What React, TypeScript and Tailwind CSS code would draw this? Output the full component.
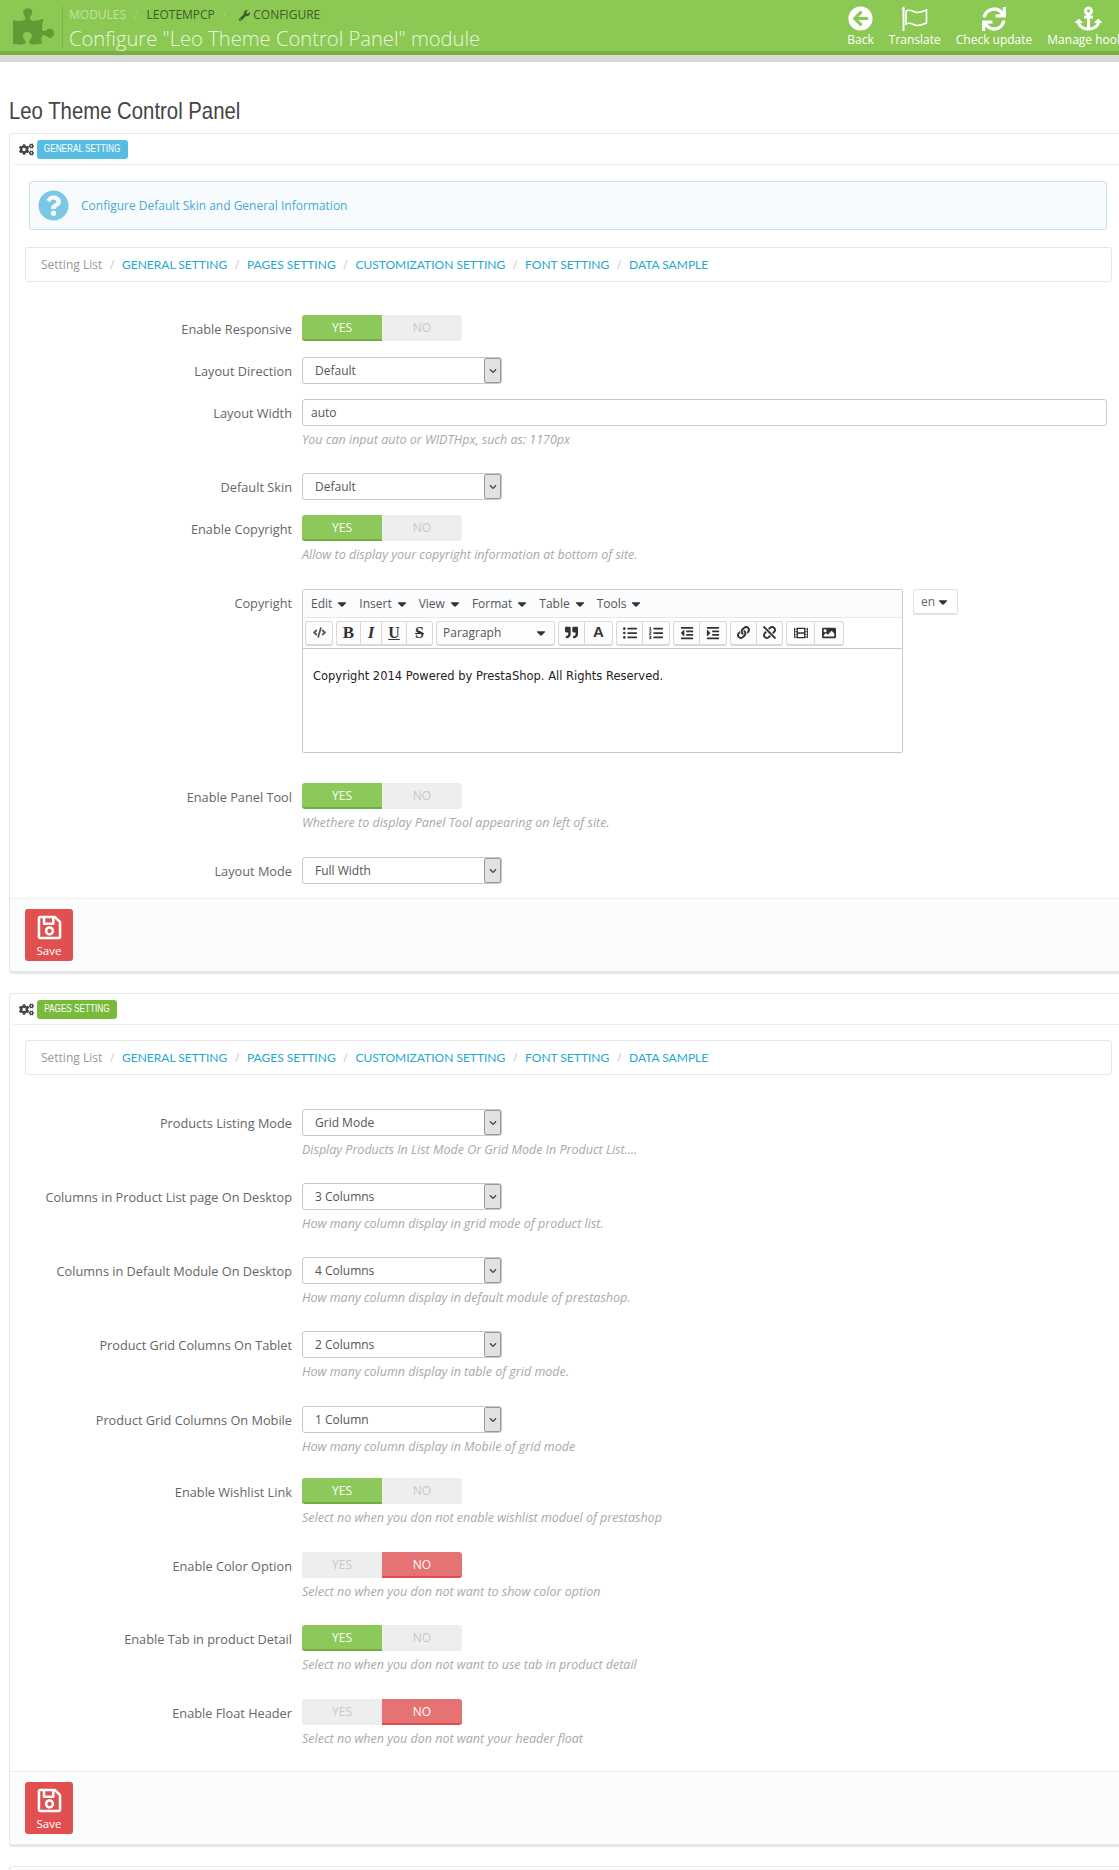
import type { ReactNode } from 'react';
import {
  FaPuzzlePiece, FaWrench, FaCogs, FaQuestionCircle, FaArrowCircleLeft, FaSync, FaAnchor, FaRegSave,
  FaCode, FaQuoteRight, FaListUl, FaListOl, FaOutdent, FaIndent, FaLink, FaUnlink, FaFilm, FaImage, FaCaretDown, FaChevronDown,
} from 'react-icons/fa';

function FlagIcon() {
  return (
    <svg width="28" height="26" viewBox="0 0 28 26" fill="none" stroke="currentColor" strokeWidth="2">
      <circle cx="2.5" cy="2.5" r="1.5" fill="currentColor" stroke="none" />
      <path d="M2.5 3v22" />
      <path d="M5 5c5-2.5 7 1.5 11 1.5 3 0 6-1 9.500-2.500v13c-3.500 1.500-6.500 2.500-9.500 2.500-4 0-6-4-11-1.500z" strokeWidth="1.600" />
    </svg>
  );
}

function Toggle({ on = true }: { on?: boolean }) {
  return (
    <div className="flex h-[26px] w-[160px] text-center text-[12px] leading-[25px]">
      <div className={on ? 'w-[80px] rounded-l-[3px] border-b-2 border-[#72ad42] bg-[#8cc95a] text-white' : 'w-[80px] rounded-l-[3px] bg-[#eeeeee] text-[#c8c8c8]'}>YES</div>
      <div className={on ? 'w-[80px] rounded-r-[3px] bg-[#eeeeee] text-[#c8c8c8]' : 'w-[80px] rounded-r-[3px] border-b-2 border-[#e04f4f] bg-[#e67373] text-white'}>NO</div>
    </div>
  );
}

function SelectBox({ value }: { value: string }) {
  return (
    <div className="flex h-[27px] w-[200px] items-center justify-between rounded-[3px] border border-[#c8c8c8] bg-white pl-[12px] text-[12px] text-[#555]">
      <span>{value}</span>
      <span className="flex h-[25px] w-[17px] items-center justify-center rounded-[2px] border border-[#999] bg-[#e2e2e2] text-[#444]">
        <FaChevronDown size={8} />
      </span>
    </div>
  );
}

function Row({ label, help, className, children }: { label: string; help?: string; className: string; children: ReactNode }) {
  return (
    <div className={`flex ${className}`}>
      <label className="w-[278px] shrink-0 pt-[5px] pr-[10px] text-right text-[12.75px] leading-[18px] text-[#666]">{label}</label>
      <div className="min-w-0 flex-1">
        {children}
        {help && <p className="mt-[5px] h-[18px] text-[12.5px] leading-[18px] text-[#a8a8a8] italic">{help}</p>}
      </div>
    </div>
  );
}

function SettingList() {
  const items = ['GENERAL SETTING', 'PAGES SETTING', 'CUSTOMIZATION SETTING', 'FONT SETTING', 'DATA SAMPLE'];
  return (
    <div className="ml-[1px] flex h-[35px] items-center rounded-[3px] border border-[#e6e6e6] pl-[15px] text-[12px]">
      <span className="text-[#999]">Setting List</span>
      {items.map((item) => (
        <span key={item} className="flex items-center">
          <span className="mx-[7.7px] text-[#ccc]">/</span>
          <a className="font-['Lato',sans-serif] text-[12px] text-[#25a8cf]">{item}</a>
        </span>
      ))}
    </div>
  );
}

function SaveFooter() {
  return (
    <div className="border-t border-[#eeeeee] bg-[#fbfcfe] pt-[10px] pb-[10px] pl-[15px]">
      <button className="flex h-[52px] w-[48px] flex-col items-center rounded-[3px] bg-[#e15050] pt-[5px] text-[11.5px] leading-[15px] text-white">
        <FaRegSave size={27} />
        <span className="mt-[2px]">Save</span>
      </button>
    </div>
  );
}

function PanelHead({ title, badgeClass }: { title: string; badgeClass: string }) {
  return (
    <div className="mx-[3px] flex h-[31px] items-center gap-[3px] border-b border-[#eeeeee] pl-[6px]">
      <FaCogs size={15} className="text-[#444]" />
      <span className={`flex h-[19px] items-center justify-center rounded-[3px] ${badgeClass}`}>
        <span className="scale-x-[0.78] font-['Liberation_Sans',sans-serif] text-[10.5px] whitespace-nowrap text-white">{title}</span>
      </span>
    </div>
  );
}

function ToolButton({ children, className = '' }: { children: ReactNode; className?: string }) {
  return <div className={`flex h-full items-center justify-center border-r border-[#d9d9d9] last:border-r-0 ${className}`}>{children}</div>;
}

function ToolGroup({ children }: { children: ReactNode }) {
  return <div className="flex h-[25px] rounded-[3px] border border-b-2 border-[#d9d9d9] bg-[#fdfdfd] text-[#333]">{children}</div>;
}

function Editor() {
  return (
    <div className="h-[164px] w-[601px] rounded-[2px] border border-[#c9c9c9]">
      <div className="flex h-[28px] items-center gap-[10px] border-b border-[#e8e8e8] bg-[#fbfcfe] pl-[8px] text-[12px] text-[#555]">
        {['Edit', 'Insert', 'View', 'Format', 'Table', 'Tools'].map((m) => (
          <span key={m} className="flex items-center gap-[3px]">
            {m}
            <FaCaretDown size={14} className="text-[#333]" />
          </span>
        ))}
      </div>
      <div className="flex h-[31px] items-center gap-[3px] border-b border-[#c9c9c9] pl-[2px]">
        <ToolGroup><ToolButton className="w-[26px]"><FaCode size={13} className="text-[#555]" /></ToolButton></ToolGroup>
        <ToolGroup>
          <ToolButton className="w-[24px] font-['Liberation_Serif',serif] text-[17px] font-bold">B</ToolButton>
          <ToolButton className="w-[21px] font-['Liberation_Serif',serif] text-[17px] font-bold italic">I</ToolButton>
          <ToolButton className="w-[25px] font-['Liberation_Serif',serif] text-[16px] font-bold underline">U</ToolButton>
          <ToolButton className="w-[25px] font-['Liberation_Serif',serif] text-[16px] font-bold line-through">S</ToolButton>
        </ToolGroup>
        <ToolGroup>
          <div className="flex w-[117px] items-center justify-between pr-[6px] pl-[6px] text-[12px] text-[#555]">
            Paragraph
            <FaCaretDown size={14} className="text-[#333]" />
          </div>
        </ToolGroup>
        <ToolGroup>
          <ToolButton className="w-[26px]"><FaQuoteRight size={13} /></ToolButton>
          <ToolButton className="w-[27px] font-['Liberation_Sans',sans-serif] text-[15px] font-bold">A</ToolButton>
        </ToolGroup>
        <ToolGroup>
          <ToolButton className="w-[26px]"><FaListUl size={14} /></ToolButton>
          <ToolButton className="w-[26px]"><FaListOl size={14} /></ToolButton>
        </ToolGroup>
        <ToolGroup>
          <ToolButton className="w-[26px]"><FaOutdent size={14} /></ToolButton>
          <ToolButton className="w-[26px]"><FaIndent size={14} /></ToolButton>
        </ToolGroup>
        <ToolGroup>
          <ToolButton className="w-[26px]"><FaLink size={13} /></ToolButton>
          <ToolButton className="w-[25px]"><FaUnlink size={13} /></ToolButton>
        </ToolGroup>
        <ToolGroup>
          <ToolButton className="w-[28px]"><FaFilm size={14} /></ToolButton>
          <ToolButton className="w-[28px]"><FaImage size={14} /></ToolButton>
        </ToolGroup>
      </div>
      <div className="px-[10px] pt-[19px] font-['DejaVu_Sans',sans-serif] text-[11.5px] leading-[16px] text-[#222]">
        Copyright 2014 Powered by PrestaShop. All Rights Reserved.
      </div>
    </div>
  );
}

const headerActions = [
  { label: 'Back', icon: <FaArrowCircleLeft size={25} /> },
  { label: 'Translate', icon: <FlagIcon /> },
  { label: 'Check update', icon: <FaSync size={24} /> },
  { label: 'Manage hooks', icon: <FaAnchor size={27} /> },
];

export default function App() {
  return (
    <div className="h-[1870px] w-[1119px] overflow-hidden bg-white font-['Open_Sans',sans-serif]">
      {/* Top bar */}
      <header className="flex h-[55px] justify-between overflow-hidden border-b-4 border-[#78b13f] bg-[#8bc954]">
        <div className="flex pt-[6px] pl-[13px]">
          <FaPuzzlePiece size={41} className="text-[#5f9c35]" />
          <div className="ml-[8px] h-[42px] border-l border-[#7ab546] pl-[6px]">
            <div className="mt-[1px] flex items-center text-[12px] leading-[16px] text-[#3e5c28]">
              <span className="text-[#c3e3a3]">MODULES</span>
              <span className="mx-[8px] text-[#a5d27c]">/</span>
              <span>LEOTEMPCP</span>
              <span className="mx-[8px] text-[#a5d27c]">/</span>
              <FaWrench size={11} className="mr-[3px] ml-[4px]" />
              <span>CONFIGURE</span>
            </div>
            <h2 className="mt-[2px] text-[20.2px] leading-[27px] font-light whitespace-nowrap text-[#eaf6de]">Configure "Leo Theme Control Panel" module</h2>
          </div>
        </div>
        <div className="-mr-[10px] flex shrink-0 gap-[15px] pt-[5px] text-[12px] whitespace-nowrap text-white">
          {headerActions.map((a) => (
            <div key={a.label} className="flex flex-col items-center">
              <span className="flex h-[27px] items-center">{a.icon}</span>
              <span className="leading-[16px]">{a.label}</span>
            </div>
          ))}
        </div>
      </header>
      <div className="h-[7px] bg-[#d8d8d8]" />

      <h1 className="mt-[34px] mb-[8px] ml-[9px] h-[29px] origin-left scale-x-[0.847] font-['Liberation_Sans',sans-serif] text-[24px] leading-[29px] whitespace-nowrap text-[#444]">Leo Theme Control Panel</h1>

      {/* General setting */}
      <section className="ml-[9px] w-[1122px] rounded-[4px] border border-b-[3px] border-[#e6e6e6]">
        <PanelHead title="GENERAL SETTING" badgeClass="w-[91px] bg-[#56bde0]" />
        <div className="pt-[16px] pr-[18px] pl-[14px]">
          <div className="mr-[5px] ml-[5px] flex h-[49px] items-center rounded-[3px] border border-[#c9e5f0] bg-[#f7fbfe] pl-[8px] text-[12px] text-[#45abcf]">
            <FaQuestionCircle size={31} className="text-[#7cc7e6]" />
            <span className="ml-[12px]">Configure Default Skin and General Information</span>
          </div>
          <div className="mt-[17px] mb-[33px]"><SettingList /></div>
          <Row label="Enable Responsive" className="mb-[16px]"><Toggle /></Row>
          <Row label="Layout Direction" className="mb-[15px]"><SelectBox value="Default" /></Row>
          <Row label="Layout Width" help="You can input auto or WIDTHpx, such as: 1170px" className="mb-[24px]">
            <div className="flex h-[27px] w-[805px] items-center rounded-[3px] border border-[#c8c8c8] pl-[8px] text-[12px] text-[#555]">auto</div>
          </Row>
          <Row label="Default Skin" className="mb-[15px]"><SelectBox value="Default" /></Row>
          <Row label="Enable Copyright" help="Allow to display your copyright information at bottom of site." className="mb-[25px]"><Toggle /></Row>
          <Row label="Copyright" className="mb-[30px]">
            <div className="flex items-start gap-[10px]">
              <Editor />
              <button className="flex h-[26px] items-center gap-[1px] rounded-[3px] border border-b-2 border-[#e0e0e0] px-[7px] text-[12px] text-[#666]">en <FaCaretDown size={14} className="text-[#333]" /></button>
            </div>
          </Row>
          <Row label="Enable Panel Tool" help="Whethere to display Panel Tool appearing on left of site." className="mb-[25px]"><Toggle /></Row>
          <Row label="Layout Mode" className="mb-[14px]"><SelectBox value="Full Width" /></Row>
        </div>
        <SaveFooter />
      </section>

      {/* Pages setting */}
      <section className="mt-[19px] ml-[9px] w-[1122px] rounded-[4px] border border-b-[3px] border-[#e6e6e6]">
        <PanelHead title="PAGES SETTING" badgeClass="w-[80px] bg-[#78bb3c]" />
        <div className="pt-[15px] pr-[18px] pl-[14px]">
          <div className="mb-[34px]"><SettingList /></div>
          <Row label="Products Listing Mode" help="Display Products In List Mode Or Grid Mode In Product List...." className="mb-[24px]"><SelectBox value="Grid Mode" /></Row>
          <Row label="Columns in Product List page On Desktop" help="How many column display in grid mode of product list." className="mb-[24px]"><SelectBox value="3 Columns" /></Row>
          <Row label="Columns in Default Module On Desktop" help="How many column display in default module of prestashop." className="mb-[24px]"><SelectBox value="4 Columns" /></Row>
          <Row label="Product Grid Columns On Tablet" help="How many column display in table of grid mode." className="mb-[25px]"><SelectBox value="2 Columns" /></Row>
          <Row label="Product Grid Columns On Mobile" help="How many column display in Mobile of grid mode" className="mb-[22px]"><SelectBox value="1 Column" /></Row>
          <Row label="Enable Wishlist Link" help="Select no when you don not enable wishlist moduel of prestashop" className="mb-[25px]"><Toggle /></Row>
          <Row label="Enable Color Option" help="Select no when you don not want to show color option" className="mb-[24px]"><Toggle on={false} /></Row>
          <Row label="Enable Tab in product Detail" help="Select no when you don not want to use tab in product detail" className="mb-[25px]"><Toggle /></Row>
          <Row label="Enable Float Header" help="Select no when you don not want your header float" className="mb-[23px]"><Toggle on={false} /></Row>
        </div>
        <SaveFooter />
      </section>

      <section className="mt-[19px] ml-[9px] h-[40px] w-[1122px] rounded-[4px] border border-[#e6e6e6]" />
    </div>
  );
}
